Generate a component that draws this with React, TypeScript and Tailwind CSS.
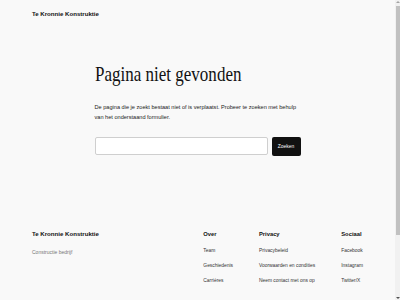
const overLinks = ["Team", "Geschiedenis", "Carrières"];
const privacyLinks = ["Privacybeleid", "Voorwaarden en condities", "Neem contact met ons op"];
const socialLinks = ["Facebook", "Instagram", "Twitter/X"];

function FooterColumn({ title, links }: { title: string; links: string[] }) {
  return (
    <div className="flex flex-col">
      <div className="text-[5.8px] font-bold leading-[8px] text-[#111]">{title}</div>
      <ul className="mt-[9px] flex flex-col gap-[7px]">
        {links.map((link) => (
          <li key={link} className="text-[4.9px] leading-[8px] text-[#333]">
            {link}
          </li>
        ))}
      </ul>
    </div>
  );
}

export default function App() {
  return (
    <div className="flex h-screen overflow-hidden bg-[#f9f9f9] font-['Liberation_Sans',Arial,sans-serif] text-[#111]">
      <div className="min-w-0 flex-1">
        {/* Header */}
        <header className="mx-auto w-[331px] pt-[10px]">
          <div className="text-[6.1px] font-bold leading-[8px] text-[#111]">
            Te Kronnie Konstruktie
          </div>
        </header>

        {/* 404 content */}
        <main className="mx-auto w-[206px] pt-[46px]">
          <h1 className="origin-left scale-x-[0.81] font-['Liberation_Serif','Times_New_Roman',serif] text-[21px] font-normal leading-[21px] whitespace-nowrap text-[#111]">
            Pagina niet gevonden
          </h1>
          <p className="mt-[17px] text-[5.6px] leading-[10px] text-[#222]">
            De pagina die je zoekt bestaat niet of is verplaatst. Probeer te zoeken met behulp van het
            onderstaand formulier.
          </p>
          <form className="mt-[15px] flex items-start gap-[4px]" onSubmit={(e) => e.preventDefault()}>
            <input
              type="text"
              className="h-[18px] w-0 min-w-0 flex-1 rounded-[2px] border border-[#cfcfcf] bg-white text-[6px]"
            />
            <button
              type="submit"
              className="h-[19px] w-[29px] shrink-0 rounded-[2px] bg-[#111] text-[4.9px] text-white"
            >
              Zoeken
            </button>
          </form>
        </main>

        {/* Footer */}
        <footer className="mx-auto flex w-[331px] justify-between pt-[74px]">
          <div className="flex flex-col">
            <div className="text-[6.1px] font-bold leading-[8px] text-[#111]">
              Te Kronnie Konstruktie
            </div>
            <div className="mt-[10px] text-[5px] leading-[8px] text-[#777]">Constructie bedrijf</div>
          </div>
          <div className="flex gap-[26px]">
            <FooterColumn title="Over" links={overLinks} />
            <FooterColumn title="Privacy" links={privacyLinks} />
            <FooterColumn title="Sociaal" links={socialLinks} />
          </div>
        </footer>
      </div>

      {/* Scrollbar drawing */}
      <div className="flex h-full w-[5px] shrink-0 flex-col items-center bg-[#f1f1f1]">
        <div className="mt-[1px] h-0 w-0 border-x-[2px] border-b-[2px] border-x-transparent border-b-[#a3a3a3]" />
        <div className="mt-[3px] h-[229px] w-[4px] shrink-0 bg-[#c1c1c1]" />
        <div className="flex-1" />
        <div className="mb-[1px] h-0 w-0 border-x-[2px] border-t-[2px] border-x-transparent border-t-[#505050]" />
      </div>
    </div>
  );
}
